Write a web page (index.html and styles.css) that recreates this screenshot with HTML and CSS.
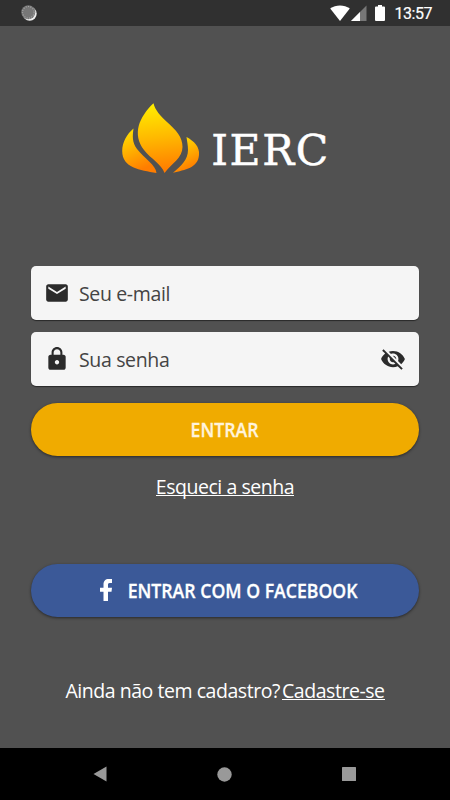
FILE: index.html
```html
<!DOCTYPE html>
<html lang="pt-BR">
<head>
  <meta charset="UTF-8" />
  <meta name="viewport" content="width=device-width, initial-scale=1" />
  <title>IERC - Entrar</title>
  <link rel="stylesheet" href="styles.css">
</head>
<body>

  <header class="status-bar">
    <svg class="sync" width="16" height="16" viewBox="0 0 16 16">
      <circle cx="8.7" cy="8.7" r="7" fill="#eee" />
      <circle cx="7.3" cy="7.3" r="7" fill="#777" />
      <circle cx="7.3" cy="7.3" r="5.8" fill="none" stroke="#aaa" stroke-width="1.2" stroke-dasharray="1 1.4" />
    </svg>
    <div class="status-icons">
      <svg width="20" height="16" viewBox="0 0 20 16">
        <path d="M.2 3.6C5.8-.7 14.2-.7 19.8 3.6L10 16z" fill="#fff" />
      </svg>
      <svg class="signal" width="16" height="16" viewBox="0 0 16 16">
        <path d="M15.5 .5V16H0z" fill="#777" />
        <path d="M9 7V16H0z" fill="#fff" />
      </svg>
      <svg class="battery" width="10" height="16" viewBox="0 0 10 16">
        <path d="M3 0h4v1.6h2q1 0 1 1V15q0 1-1 1H1q-1 0-1-1V2.600q0-1 1-1h2z" fill="#fff" />
      </svg>
      <span class="clock">13:57</span>
    </div>
  </header>

  <main class="login">
    <div class="logo">
      <svg width="78" height="71" viewBox="0 0 78 71">
        <defs>
          <linearGradient id="flame" gradientUnits="userSpaceOnUse" x1="30" y1="0" x2="38" y2="70">
            <stop offset="0" stop-color="#fff000" />
            <stop offset=".5" stop-color="#ffb800" />
            <stop offset="1" stop-color="#ff7900" />
          </linearGradient>
          <linearGradient id="flameSide" x1="0" y1="0" x2=".35" y2="1">
            <stop offset="0" stop-color="#ffe900" />
            <stop offset="1" stop-color="#ff7d00" />
          </linearGradient>
        </defs>
        <path d="M31.500 .2C33 7 38.500 13 45 19C54 27 60.500 34 60.500 44C60.500 55 50 60 42.500 70C39.500 61 29 56 22 47C10 31 17 14 31.500 .2z" fill="url(#flame)" />
        <path d="M11.500 25.500C5 31 .2 39 .2 48C.2 65 18 67 34.500 70C34 62 22 55 15 46C10 39 10.500 33 11.500 25.500z" fill="url(#flameSide)" />
        <path d="M64.500 34C72 38 78 44 77 52C76 65 63 67 51 69.700C59 63 66 57 66 47C66 42 65 38 64.500 34z" fill="url(#flameSide)" />
      </svg>
      <span class="logo-text">IERC</span>
    </div>

    <form class="login-form">
      <label class="field">
        <svg width="26" height="26" viewBox="0 0 24 24">
          <path fill="#2b2b2b" d="M20 4H4c-1.100 0-1.990.9-1.990 2L2 18c0 1.100.9 2 2 2h16c1.100 0 2-.9 2-2V6c0-1.100-.9-2-2-2zm0 4l-8 5-8-5V6l8 5 8-5v2z" />
        </svg>
        <input type="email" placeholder="Seu e-mail" aria-label="Seu e-mail" />
      </label>
      <label class="field">
        <svg width="26" height="26" viewBox="0 0 24 24">
          <path fill="#2b2b2b" d="M18 8h-1V6c0-2.760-2.240-5-5-5S7 3.240 7 6v2H6c-1.100 0-2 .9-2 2v10c0 1.100.9 2 2 2h12c1.100 0 2-.9 2-2V10c0-1.100-.9-2-2-2zm-6 9c-1.100 0-2-.9-2-2s.9-2 2-2 2 .9 2 2-.9 2-2 2zm3.100-9H8.900V6c0-1.710 1.390-3.100 3.100-3.100s3.100 1.390 3.100 3.100v2z" />
        </svg>
        <input type="password" placeholder="Sua senha" aria-label="Sua senha" />
        <svg class="eye" width="26" height="26" viewBox="0 0 24 24">
          <path fill="#2b2b2b" d="M12 7c2.760 0 5 2.240 5 5 0 .65-.13 1.260-.36 1.830l2.920 2.920c1.510-1.260 2.700-2.890 3.430-4.750-1.730-4.390-6-7.500-11-7.500-1.400 0-2.740.25-3.980.7l2.160 2.160C10.740 7.130 11.350 7 12 7zM2 4.270l2.280 2.280.46.46C3.080 8.300 1.780 10.020 1 12c1.730 4.390 6 7.500 11 7.500 1.550 0 3.030-.3 4.380-.84l.42.42L19.730 22 21 20.730 3.270 3 2 4.270zM7.530 9.800l1.550 1.550c-.05.21-.08.43-.08.65 0 1.660 1.340 3 3 3 .22 0 .44-.03.65-.08l1.550 1.550c-.67.33-1.410.53-2.200.53-2.760 0-5-2.240-5-5 0-.79.2-1.530.53-2.200zm4.310-.78l3.150 3.150.02-.16c0-1.660-1.340-3-3-3l-.17.01z" />
        </svg>
      </label>
      <button type="button" class="btn btn-primary"><span class="btn-label">ENTRAR</span></button>
    </form>

    <a class="link forgot">Esqueci a senha</a>

    <button type="button" class="btn btn-facebook">
      <svg width="12" height="22" viewBox="0 0 12 22">
        <path d="M3.500 22V12.800H0V8.800h3.500V5.500C3.500 2 5.400 0 8.600 0H12v4H9.700C8.400 4 8 4.700 8 5.800v3h4l-.5 4H8V22z" fill="#fff" />
      </svg>
      <span class="btn-label">ENTRAR COM O FACEBOOK</span>
    </button>

    <p class="signup">Ainda não tem cadastro?<a class="link">Cadastre-se</a></p>
  </main>

  <nav class="nav-bar">
    <svg width="14" height="16" viewBox="0 0 14 16"><path d="M13.500 .5v15L.5 8z" fill="#999" /></svg>
    <svg width="15" height="15" viewBox="0 0 15 15"><circle cx="7.500" cy="7.500" r="7.200" fill="#999" /></svg>
    <svg width="14" height="14" viewBox="0 0 14 14"><rect width="14" height="14" rx=".5" fill="#999" /></svg>
  </nav>

</body>
</html>
```
FILE: styles.css
```css
* {
  box-sizing: border-box;
}
html, body {
  margin: 0;
  padding: 0;
  height: 100%;
}
body {
  display: flex;
  flex-direction: column;
  height: 800px;
  overflow: hidden;
  background: #515151;
  color: #fff;
  font-family: "Open Sans", "Noto Sans", sans-serif;
  font-size: 19.5px;
  letter-spacing: -0.45px;
}
svg {
  display: block;
  flex-shrink: 0;
}

/* Android status bar */
.status-bar {
  display: flex;
  justify-content: space-between;
  align-items: center;
  height: 26px;
  padding: 0 18px 0 21px;
  background: #303030;
}
.status-icons {
  display: flex;
  align-items: center;
}
.signal {
  margin-left: 1px;
}
.battery {
  margin-left: 8px;
}
.clock {
  margin-left: 9px;
  padding-top: 2px;
  font: 400 16px/24px Roboto, sans-serif;
  -webkit-text-stroke: 0.2px #fff;
}

.login {
  flex: 1;
  display: flex;
  flex-direction: column;
  align-items: center;
  padding: 77px 31px 0;
}
.logo {
  display: flex;
  align-items: center;
  height: 71px;
  margin: 0 0 92px 2px;
}
.logo-text {
  margin: 25px 0 0 11px;
  font: 42.5px/46px "DejaVu Serif", serif;
  letter-spacing: 1.5px;
  -webkit-text-stroke: 0.5px #fff;
}

.login-form {
  width: 100%;
}
.field {
  display: flex;
  align-items: center;
  height: 53.5px;
  margin-bottom: 12.5px;
  padding: 0 13px;
  background: #f5f5f5;
  border-radius: 5px;
  box-shadow: 0 1px 1px rgba(0, 0, 0, 0.5);
}
.field input {
  flex: 1;
  min-width: 0;
  height: 40px;
  margin-left: 9px;
  padding: 2px 0 0;
  border: none;
  outline: none;
  background: none;
  font: inherit;
  letter-spacing: -0.35px;
}
.field input::placeholder {
  color: #444;
  opacity: 1;
}

.btn {
  display: flex;
  align-items: center;
  justify-content: center;
  width: 100%;
  height: 53px;
  padding: 0;
  border: none;
  border-radius: 27px;
  color: #fff;
  font: inherit;
  font-size: 19px;
  font-weight: 600;
  letter-spacing: 0;
  box-shadow: 0 1px 3px rgba(0, 0, 0, 0.5);
}
.btn-label {
  padding-top: 2px;
  transform: scaleX(0.93);
  -webkit-text-stroke: 0.3px currentColor;
}
.btn-primary {
  margin-top: 17px;
  background: #f0ab00;
  color: #fff3dc;
}
.btn-facebook {
  margin-top: 68px;
  padding-left: 8px;
  background: #3b5998;
}
.btn-facebook .btn-label {
  margin: 0 -9px 0 7px;
}

.link {
  display: inline-block;
  height: 21px;
  border-bottom: 1px solid #fff;
  line-height: 21px;
}
.forgot {
  margin-top: 20px;
  height: 20px;
  line-height: 22px;
}
.signup {
  margin: 61px 0 0;
  line-height: 26px;
}
.signup .link {
  margin-left: 2px;
  height: 20px;
}

/* Android navigation buttons */
.nav-bar {
  display: flex;
  align-items: center;
  justify-content: space-between;
  height: 52px;
  padding: 0 94px 0 93px;
  background: #000;
}
```
